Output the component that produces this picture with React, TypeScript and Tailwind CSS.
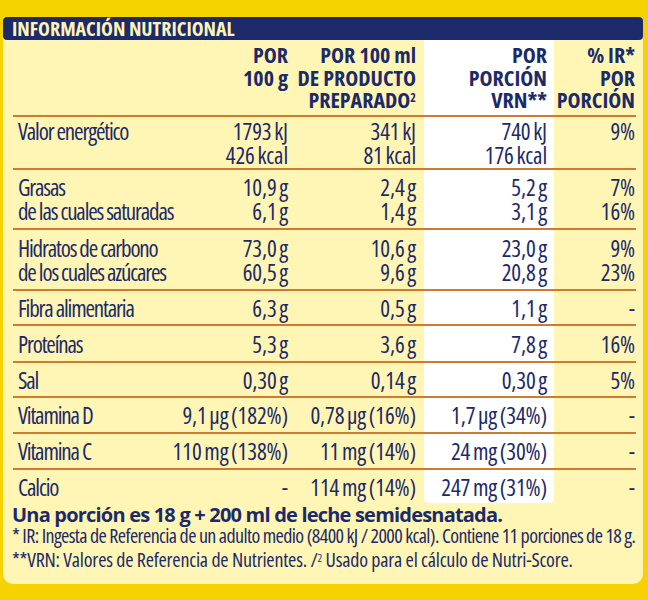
const cond = "font-['Open_Sans',sans-serif] [font-stretch:75%]";

type Row = {
  label: string[];
  a: string[];
  b: string[];
  c: string[];
  d: string[];
  h: string;
};

const rows: Row[] = [
  { label: ["Valor energético", ""], a: ["1793 kJ", "426 kcal"], b: ["341 kJ", "81 kcal"], c: ["740 kJ", "176 kcal"], d: ["9%", ""], h: "h-[53px]" },
  { label: ["Grasas", "de las cuales saturadas"], a: ["10,9 g", "6,1 g"], b: ["2,4 g", "1,4 g"], c: ["5,2 g", "3,1 g"], d: ["7%", "16%"], h: "h-[60px]" },
  { label: ["Hidratos de carbono", "de los cuales azúcares"], a: ["73,0 g", "60,5 g"], b: ["10,6 g", "9,6 g"], c: ["23,0 g", "20,8 g"], d: ["9%", "23%"], h: "h-[61px]" },
  { label: ["Fibra alimentaria"], a: ["6,3 g"], b: ["0,5 g"], c: ["1,1 g"], d: ["-"], h: "h-[35px]" },
  { label: ["Proteínas"], a: ["5,3 g"], b: ["3,6 g"], c: ["7,8 g"], d: ["16%"], h: "h-[37px]" },
  { label: ["Sal"], a: ["0,30 g"], b: ["0,14 g"], c: ["0,30 g"], d: ["5%"], h: "h-[35px]" },
  { label: ["Vitamina D"], a: ["9,1 µg (182%)"], b: ["0,78 µg (16%)"], c: ["1,7 µg (34%)"], d: ["-"], h: "h-[36px]" },
  { label: ["Vitamina C"], a: ["110 mg (138%)"], b: ["11 mg (14%)"], c: ["24 mg (30%)"], d: ["-"], h: "h-[36px]" },
  { label: ["Calcio"], a: ["-"], b: ["114 mg (14%)"], c: ["247 mg (31%)"], d: ["-"], h: "h-[35px]" },
];

function Lines({ items }: { items: string[] }) {
  return (
    <>
      {items.map((t, i) => (
        <div key={i} className="h-[24px] whitespace-nowrap">
          {t}
        </div>
      ))}
    </>
  );
}

const valueCell = "flex flex-col items-end justify-center tracking-[-0.005em] [word-spacing:-1.5px]";

export default function App() {
  return (
    <div className="h-[600px] w-[648px] bg-[#f6d300] pl-[3px] pr-[5px] pt-[17px] text-[#1c2a6a]">
      <div className="flex h-[567px] flex-col rounded-b-[10px] bg-[#fff6b5]">
        <div className="flex h-[23px] items-center rounded-[4px] bg-[#1c2a6a] pl-[9px]">
          <span className={`${cond} text-[20px] font-bold leading-none text-[#fdf3b6]`}>
            INFORMACIÓN NUTRICIONAL
          </span>
        </div>

        <div className={`ml-[10px] mr-[7px] ${cond}`}>
          <div className="grid h-[75px] grid-cols-[187px_92px_132px_130px_82px] text-[22px] font-bold leading-[22.5px]">
            <div />
            <div className="flex flex-col items-end pr-[4px] pt-[3px]">
              <div>POR</div>
              <div className="whitespace-nowrap">100 g</div>
            </div>
            <div className="flex flex-col items-end whitespace-nowrap pr-[8px] pt-[3px]">
              <div>POR 100 ml</div>
              <div>DE PRODUCTO</div>
              <div>
                PREPARADO<sup className="text-[12px]">2</sup>
              </div>
            </div>
            <div className="flex flex-col items-end bg-white pr-[7px] pt-[3px]">
              <div>POR</div>
              <div>PORCIÓN</div>
              <div>VRN**</div>
            </div>
            <div className="flex flex-col items-end whitespace-nowrap pr-[1px] pt-[3px]">
              <div>% IR*</div>
              <div>POR</div>
              <div>PORCIÓN</div>
            </div>
          </div>

          {rows.map((r, i) => (
            <div
              key={i}
              className={`grid ${r.h} grid-cols-[187px_92px_132px_130px_82px] border-t-2 border-[#cf7a2e] text-[23px] leading-[24px]`}
            >
              <div className="flex flex-col justify-center pl-[5px] tracking-[-0.05em]">
                <Lines items={r.label} />
              </div>
              <div className={`${valueCell} pr-[4px]`}>
                <Lines items={r.a} />
              </div>
              <div className={`${valueCell} pr-[8px]`}>
                <Lines items={r.b} />
              </div>
              <div
                className={`${valueCell} bg-white pr-[7px] ${i === rows.length - 1 ? "rounded-b-[5px]" : ""}`}
              >
                <Lines items={r.c} />
              </div>
              <div className={`${valueCell} pr-[1px]`}>
                <Lines items={r.d} />
              </div>
            </div>
          ))}
        </div>

        <div className="pl-[9px] pt-[2px]">
          <p className="whitespace-nowrap font-['Open_Sans',sans-serif] text-[20px] font-bold leading-[19px] tracking-[-0.04em]">
            Una porción es 18 g + 200 ml de leche semidesnatada.
          </p>
          <p className={`${cond} whitespace-nowrap text-[20px] leading-[24px] tracking-[-0.03em]`}>
            * IR: Ingesta de Referencia de un adulto medio (8400 kJ / 2000 kcal). Contiene 11 porciones de 18 g.
          </p>
          <p className={`${cond} whitespace-nowrap text-[20px] leading-[24px] tracking-[-0.01em]`}>
            **VRN: Valores de Referencia de Nutrientes. /<sup className="text-[11px]">2</sup> Usado para el cálculo de
            Nutri-Score.
          </p>
        </div>
      </div>
    </div>
  );
}
